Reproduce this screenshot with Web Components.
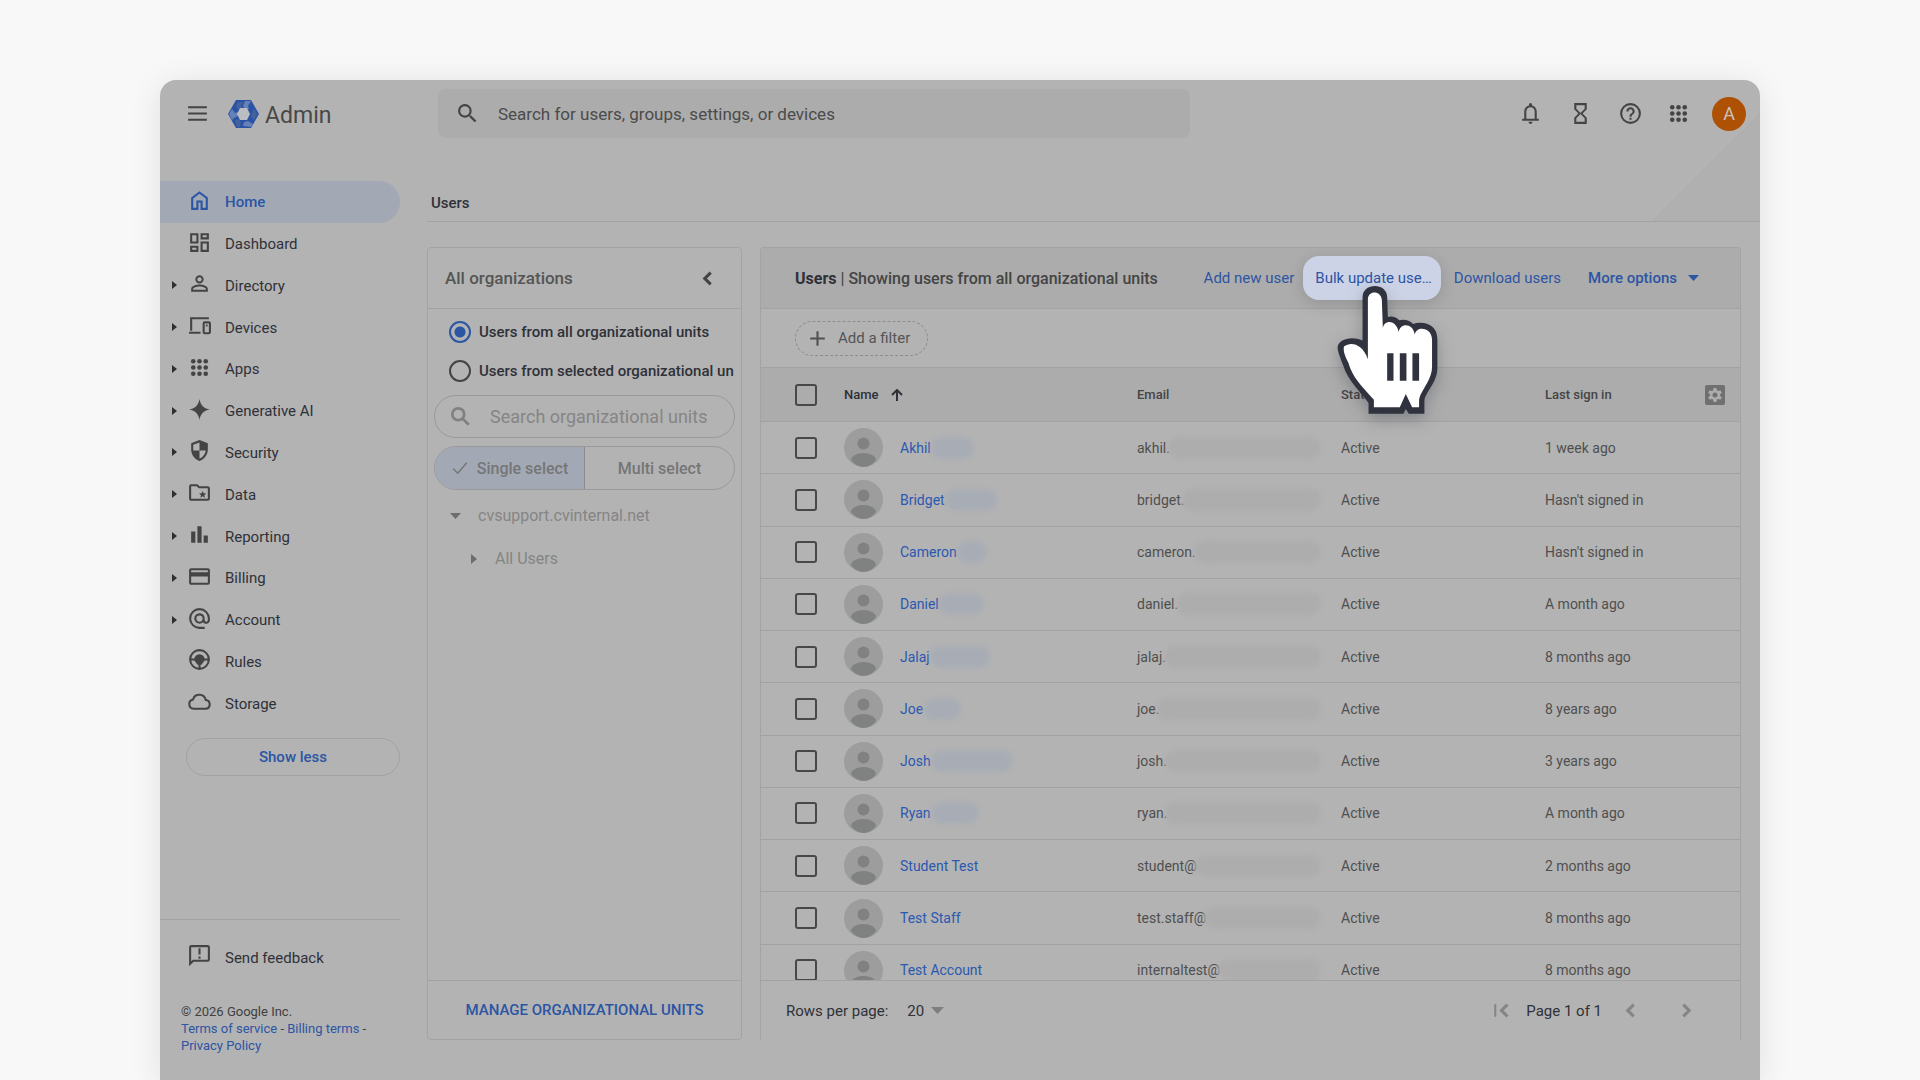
<!DOCTYPE html>
<html lang="en">
<head>
<meta charset="utf-8">
<title>Admin - Users</title>
<style>
  html, body { margin: 0; height: 100%; }
  body {
    overflow: hidden;
    background: #f8f8f8;
    font-family: Roboto, "Liberation Sans", sans-serif;
    font-size: 15px;
    color: #303238;
    --surface: #b3b3b3;
    --band: #acacac;
    --line: #a3a3a3;
    --ink: #2f3138;
    --icon: #444444;
    --blue: #2c55a4;
    --tint: #a2a9b5;
  }
</style>
</head>
<body>
<admin-app></admin-app>

<template id="t-app">
  <style>
    :host { display: flex; height: 100vh; box-sizing: border-box; padding: 80px 160px 0; }
    .window {
      flex: 1; min-width: 0; display: flex; flex-direction: column; position: relative;
      background: var(--surface); border-radius: 16px 16px 0 0; overflow: hidden;
      box-shadow: 0 4px 32px rgba(0,0,0,.1);
    }
    .corner { position: absolute; top: 0; right: 0; width: 108px; height: 142px; }
    admin-topbar { position: relative; }
    .work { flex: 1; min-height: 0; display: flex; }
    main { flex: 1; min-width: 0; display: flex; flex-direction: column; padding: 33px 0 40px 27px; position: relative; }
    h1 { margin: 0; height: 41px; line-height: 46px; padding-left: 4px; font-size: 15px; font-weight: 500; color: var(--ink); border-bottom: 1px solid var(--line); }
    .panels { flex: 1; min-height: 0; display: flex; gap: 18px; padding: 25px 19px 0 0; }
    users-panel { flex: 1; min-width: 0; }
  </style>
  <div class="window">
    <svg class="corner" viewBox="0 0 108 142" aria-hidden="true">
      <path d="M0 142 108 34V142z" fill="#b0b0b0"/><path d="M0 142 108 34" stroke="#ababab"/>
    </svg>
    <admin-topbar></admin-topbar>
    <div class="work">
      <admin-sidebar></admin-sidebar>
      <main>
        <h1>Users</h1>
        <div class="panels">
          <org-panel></org-panel>
          <users-panel></users-panel>
        </div>
      </main>
    </div>
  </div>
</template>

<template id="t-topbar">
  <style>
    :host { display: flex; align-items: center; height: 67px; padding: 0 14px 0 25px; }
    button { background: none; border: 0; padding: 0; color: var(--icon); display: flex; }
    .brand { display: flex; align-items: center; gap: 6px; margin-left: 18px; width: 195px; font-size: 23px; color: #484848; text-decoration: none; }
    .brand svg { width: 31px; height: 28px; }
    .brand span { padding-top: 3px; }
    .search { flex: 0 1 752px; height: 49px; display: flex; align-items: center; gap: 18px; box-sizing: border-box; padding: 0 17px; margin-left: 15px; background: var(--band); border-radius: 8px; color: var(--icon); }
    input { flex: 1; min-width: 0; border: 0; background: none; outline: 0; font: inherit; font-size: 17px; padding: 0; }
    input::placeholder { color: #4b4b4b; opacity: 1; }
    .tools { margin-left: auto; display: flex; align-items: center; gap: 25px; }
    .tools .apps { margin-left: -2px; }
    .avatar { width: 34px; height: 34px; border-radius: 50%; background: #ae5104; color: #c9c3bd; font: 400 18px Roboto, sans-serif; align-items: center; justify-content: center; margin-left: -4px; }
  </style>
  <button aria-label="Main menu"><ui-icon name="menu"></ui-icon></button>
  <a class="brand" href="#">
    <svg viewBox="0 0 31 28" aria-hidden="true">
      <path d="M8 0h15l8 14-8 14H8L0 14z" fill="#2a53a6"/>
      <path d="M17 1h6l-3 5 1 3h-4l-2-3zM1 14l3-5 3 4 3-1v4l-4 2-2 2zM15 26l1-4 4-1 5 3-2 3z" fill="#6681b8"/>
      <path d="M10 2h5l-2 4 1 2-4 1-2-3zM26 8l3 6-3 6-3-3 1-4zM7 20l4-1 2 4-1 4H9z" fill="#43629c"/>
      <path d="M12 8h7l3 6-3 6h-7l-3-6z" fill="#bcbdc1"/>
    </svg>
    <span>Admin</span>
  </a>
  <label class="search"><ui-icon name="search"></ui-icon><input type="text" aria-label="Search" placeholder="Search for users, groups, settings, or devices"></label>
  <div class="tools">
    <button aria-label="Notifications"><ui-icon name="bell"></ui-icon></button>
    <button aria-label="Tasks"><ui-icon name="hourglass"></ui-icon></button>
    <button aria-label="Help"><ui-icon name="help"></ui-icon></button>
    <button class="apps" aria-label="Google apps"><ui-icon name="apps"></ui-icon></button>
    <button class="avatar" aria-label="Account A">A</button>
  </div>
</template>

<template id="t-sidebar">
  <style>
    :host { display: flex; flex-direction: column; width: 240px; box-sizing: border-box; padding: 34px 0 26px; }
    nav { display: grid; grid-auto-rows: 1fr; height: 543px; }
    .less { align-self: stretch; margin: 14px 0 0 26px; height: 38px; border: 1px solid #a2a2a2; border-radius: 19px; background: none; color: var(--blue); font: inherit; font-size: 15px; font-weight: 500; }
    .foot { margin-top: auto; border-top: 1px solid var(--line); padding-top: 16px; }
    .foot nav-item { height: 42px; }
    .legal { margin: 25px 10px 0 21px; font-size: 13px; line-height: 17px; color: #404040; }
    a { color: var(--blue); text-decoration: none; }
  </style>
  <nav aria-label="Main"></nav>
  <button class="less">Show less</button>
  <div class="foot">
    <nav-item icon="feedback">Send feedback</nav-item>
    <div class="legal">© 2026 Google Inc.<br><a href="#">Terms of service</a> - <a href="#">Billing terms</a> -<br><a href="#">Privacy Policy</a></div>
  </div>
</template>

<template id="t-nav">
  <style>
    :host { display: block; }
    a { display: flex; align-items: center; height: 100%; box-sizing: border-box; padding-left: 12px; color: var(--ink); text-decoration: none; font-size: 15px; border-radius: 0 21px 21px 0; }
    .caret { width: 5px; height: 8px; margin-right: 10px; }
    .caret path { fill: #2f2f2f; }
    :host(:not([expandable])) .caret { visibility: hidden; }
    ui-icon { color: var(--icon); padding-bottom: 3px; }
    span { margin-left: 13px; padding-top: 1px; }
    :host([active]) a { background: var(--tint); color: var(--blue); font-weight: 500; }
    :host([active]) ui-icon { color: var(--blue); }
  </style>
  <a href="#"><svg class="caret" viewBox="0 0 5 8" aria-hidden="true"><path d="M0 0l5 4-5 4z"/></svg><ui-icon></ui-icon><span><slot></slot></span></a>
</template>

<template id="t-org">
  <style>
    :host { display: flex; flex-direction: column; box-sizing: border-box; width: 315px; border: 1px solid var(--line); border-radius: 4px; overflow: hidden; }
    header { display: flex; align-items: center; justify-content: space-between; height: 60px; padding: 0 21px 0 17px; border-bottom: 1px solid var(--line); }
    h2 { margin: 0; font-size: 17px; font-weight: 500; color: #555; }
    button { border: 0; background: none; padding: 0; font: inherit; display: flex; align-items: center; justify-content: center; }
    header button { color: #444; }
    .radios { display: flex; flex-direction: column; gap: 17px; padding: 12px 0 0 21px; }
    .radios label { display: flex; align-items: center; gap: 8px; white-space: nowrap; font-size: 15px; font-weight: 500; height: 22px; color: var(--ink); }
    input[type=radio] { appearance: none; flex: none; margin: 0; width: 22px; height: 22px; border: 2px solid #444; border-radius: 50%; }
    input[type=radio]:checked { border-color: var(--blue); background: radial-gradient(circle, var(--blue) 5px, transparent 6px); }
    .search { display: flex; align-items: center; gap: 18px; height: 41px; margin: 13px 6px 0; padding: 0 15px; border: 1px solid #999; border-radius: 22px; color: #818181; }
    .search input { flex: 1; min-width: 0; border: 0; padding: 0; background: none; outline: 0; font: inherit; font-size: 18px; }
    .search input::placeholder { color: #858585; opacity: 1; }
    .seg { display: flex; height: 42px; margin: 8px 6px 0; border: 1px solid #999; border-radius: 22px; overflow: hidden; }
    .seg button { flex: 1; font-size: 16px; font-weight: 500; color: #767676; gap: 8px; }
    .seg button[aria-pressed=true] { background: var(--tint); border-right: 1px solid #8d8d8d; }
    .tree { list-style: none; margin: 0; padding: 4px 0 0 22px; color: #858585; font-size: 16px; }
    .tree li { display: flex; align-items: center; gap: 9px; height: 43px; }
    .tree .child { padding-left: 17px; }
    .tree svg { width: 19px; height: 10px; fill: #6d6d6d; }
    footer { margin-top: auto; height: 58px; display: flex; border-top: 1px solid var(--line); }
    footer button { flex: 1; color: var(--blue); font-size: 15px; font-weight: 500; }
  </style>
  <header><h2>All organizations</h2><button aria-label="Collapse"><ui-icon name="left"></ui-icon></button></header>
  <div class="radios">
    <label><input type="radio" name="scope" checked>Users from all organizational units</label>
    <label><input type="radio" name="scope">Users from selected organizational un</label>
  </div>
  <label class="search"><ui-icon name="searchbold" size="22"></ui-icon><input type="text" aria-label="Search organizational units" placeholder="Search organizational units"></label>
  <div class="seg"><button aria-pressed="true"><ui-icon name="check" size="18"></ui-icon>Single select</button><button aria-pressed="false">Multi select</button></div>
  <ul class="tree">
    <li><svg viewBox="0 0 19 10" aria-hidden="true"><path d="M0 2h11l-5.500 6z"/></svg>cvsupport.cvinternal.net</li>
    <li class="child"><svg viewBox="0 0 19 10" aria-hidden="true"><path d="M4 0l6 5-6 5z"/></svg>All Users</li>
  </ul>
  <footer><button>MANAGE ORGANIZATIONAL UNITS</button></footer>
</template>

<template id="t-users">
  <style>
    :host { display: flex; flex-direction: column; box-sizing: border-box; border: 1px solid var(--line); border-bottom: 0; border-radius: 4px 4px 0 0; }
    header { display: flex; align-items: center; height: 60px; padding: 0 41px 0 34px; background: var(--band); border-bottom: 1px solid var(--line); white-space: nowrap; }
    h2 { margin: 0; font-size: 16px; font-weight: 500; color: #444; }
    b { font-weight: 700; color: var(--ink); }
    button { border: 0; background: none; padding: 0; font: inherit; color: var(--blue); display: flex; align-items: center; }
    .actions { margin-left: auto; display: flex; align-items: center; font-size: 15px; }
    .spot { position: relative; margin: 0 13px 0 9px; }
    .spot button { height: 44px; padding: 0 9px 0 12px; border-radius: 16px; background: #cdd3e6; box-shadow: 0 4px 16px rgba(0,0,0,.14); }
    .hand { position: absolute; left: 34px; top: 30px; width: 101px; height: 128px; overflow: visible; z-index: 2; filter: drop-shadow(0 6px 8px rgba(40,44,60,.3)); pointer-events: none; }
    .more { margin-left: 27px; gap: 11px; font-weight: 500; }
    .filter { display: flex; align-items: center; height: 58px; padding-left: 34px; border-bottom: 1px solid var(--line); }
    .filter button { height: 35px; padding: 0 17px 0 9px; gap: 8px; border: 1px dashed #8c8c8c; border-radius: 18px; color: #555; font-size: 15px; }
    .filter ui-icon { color: #505050; }
    user-table { flex: 1; min-height: 0; }
    footer { display: flex; align-items: center; height: 59px; flex: none; border-top: 1px solid var(--line); padding: 0 41px 0 25px; font-size: 15px; color: var(--ink); }
    select { appearance: none; border: 0; background: none; padding: 0; margin: 0 7px 0 19px; font: inherit; color: var(--ink); }
    .pager { margin-left: auto; display: flex; align-items: center; }
    .pager button { color: #858585; }
    .pager .first { margin-right: 12px; }
    .pager .prev { margin: 0 31px 0 16px; }
  </style>
  <header>
    <h2><b>Users</b> | Showing users from all organizational units</h2>
    <div class="actions">
      <button>Add new user</button>
      <div class="spot">
        <button>Bulk update use…</button>
        <svg class="hand" viewBox="530 138 302 385" aria-hidden="true">
          <path fill="#30333d" d="M606 302V172C606 127 680 127 680 172L682 231Q702 226 716 241Q740 235 758 252Q770 247 790 249Q831 256 831 300V385C831 430 792 460 792 485V522H745L736 508 729 522H624V490C600 455 562 425 547 375C538 350 531 335 531 322C533 300 570 286 606 302Z"/>
          <path fill="#fff" d="M622 358V178C622 150 662 150 664 180L667 264C672 240 705 238 715 276C718 248 758 248 763 284C768 256 815 262 815 300V380C815 425 776 455 776 485V503H755L736 463 718 503H640V480C600 435 577 415 563 368C554 350 547 335 550 320C570 305 605 310 622 358Z"/>
          <path fill="#30333d" d="M680 340h19v83h-19zM718 340h20v83h-20zM756 340h20v83h-20z"/>
        </svg>
      </div>
      <button>Download users</button>
      <button class="more">More options<svg width="11" height="6" viewBox="0 0 11 6" aria-hidden="true"><path d="M0 0h11L5.500 6z" fill="currentColor"/></svg></button>
    </div>
  </header>
  <div class="filter"><button><ui-icon name="plus"></ui-icon>Add a filter</button></div>
  <user-table></user-table>
  <footer>
    <label for="rows">Rows per page:</label>
    <select id="rows"><option>20</option></select>
    <svg width="13" height="7" viewBox="0 0 13 7" aria-hidden="true"><path d="M0 0h13L6.500 7z" fill="#7e7e7e"/></svg>
    <div class="pager">
      <button class="first" aria-label="First page"><ui-icon name="first"></ui-icon></button>
      <span>Page 1 of 1</span>
      <button class="prev" aria-label="Previous page"><ui-icon name="left"></ui-icon></button>
      <button aria-label="Next page"><ui-icon name="right"></ui-icon></button>
    </div>
  </footer>
</template>

<template id="t-table">
  <style>
    :host { display: block; overflow: hidden; }
    table { width: 100%; height: 629px; table-layout: fixed; border-collapse: separate; border-spacing: 0; }
    th, td { padding: 0; text-align: left; box-sizing: border-box; border-bottom: 1px solid #a2a2a2; font-size: 14px; color: #4f4f4f; white-space: nowrap; }
    th { height: 54px; background: var(--band); font-size: 13px; font-weight: 500; color: #444; }
    td { height: 52px; }
    th:first-child, td:first-child { padding-left: 34px; }
    input { appearance: none; display: block; margin: 0; width: 22px; height: 22px; border: 2px solid #484848; border-radius: 3px; }
    .sort { display: flex; align-items: center; gap: 12px; color: var(--ink); }
    .last { display: flex; align-items: center; }
    .person, .mail { display: flex; align-items: center; }
    .person svg { width: 39px; height: 39px; margin-right: 17px; flex: none; }
    a { color: #2b58b0; text-decoration: none; font-weight: 400; }
    .veil { height: 22px; border-radius: 11px; filter: blur(2px); }
    .person .veil { background: #a8adb5; }
    .mail { padding-right: 20px; }
    .mail .veil { background: #adadad; flex: 1; margin-left: -2px; }
    .gear { display: block; border: 0; padding: 0; background: none; margin-left: auto; margin-right: 15px; height: 20px; }
  </style>
  <table>
    <colgroup><col style="width:83px"><col style="width:293px"><col style="width:204px"><col style="width:204px"><col style="width:195px"></colgroup>
    <thead><tr>
      <th><input type="checkbox" aria-label="Select all users"></th>
      <th><span class="sort">Name <svg width="12" height="12" viewBox="0 0 12 12" fill="none" stroke="currentColor" stroke-width="2" aria-hidden="true"><path d="M6 12V1M1 6l5-5 5 5"/></svg></span></th>
      <th>Email</th><th>Status</th>
      <th><div class="last">Last sign in
        <button class="gear" aria-label="Manage columns"><svg width="20" height="20" viewBox="0 0 20 20"><rect width="20" height="20" rx="2" fill="#707070"/><g fill="#adadad"><circle cx="10" cy="10" r="5"/><path d="M8.500 3h3l.5 3H8zM8.500 17h3l.5-3H8z"/><path d="M8.500 3h3l.5 3H8zM8.500 17h3l.5-3H8z" transform="rotate(60 10 10)"/><path d="M8.500 3h3l.5 3H8zM8.500 17h3l.5-3H8z" transform="rotate(120 10 10)"/></g><circle cx="10" cy="10" r="2.500" fill="#707070"/></svg></button></div></th>
    </tr></thead>
    <tbody></tbody>
  </table>
</template>

<script>
const ICONS = {
  menu: '<path d="M3 5h18v2H3zM3 11h18v2H3zM3 17h18v2H3z"/>',
  search: '<path d="M15.500 14h-.8l-.3-.3a6.500 6.500 0 1 0-.7.700l.3.300v.8l5 5 1.500-1.500zm-6 0a4.500 4.500 0 1 1 0-9 4.500 4.500 0 0 1 0 9z"/>',
  searchbold: '<g fill="none" stroke="currentColor" stroke-width="3"><circle cx="9" cy="9" r="6.500"/><path d="M13.500 13.500l7 7"/></g>',
  bell: '<path d="M4 19v-2h2v-7c0-2.800 1.700-5.100 4.500-5.800v-.7a1.500 1.500 0 0 1 3 0v.7C16.300 4.900 18 7.200 18 10v7h2v2zm8 3a2 2 0 0 1-2-2h4a2 2 0 0 1-2 2zm-4-5h8v-7a4 4 0 0 0-8 0z"/>',
  hourglass: '<path d="M6 2v6l4 4-4 4v6h12v-6l-4-4 4-4V2zm10 14.500V20H8v-3.500l4-4zm-4-5l-4-4V4h8v3.500z"/>',
  help: '<path d="M11 18h2v-2h-2zm1-16a10 10 0 1 0 0 20 10 10 0 0 0 0-20zm0 18a8 8 0 1 1 0-16 8 8 0 0 1 0 16zm0-14a4 4 0 0 0-4 4h2a2 2 0 1 1 4 0c0 2-3 1.750-3 5h2c0-2.250 3-2.500 3-5a4 4 0 0 0-4-4z"/>',
  apps: [6,12,18].map(y => [6,12,18].map(x => `<circle cx="${x}" cy="${y}" r="2.200"/>`).join('')).join(''),
  home: '<path d="M6 19h3v-7h6v7h3v-9l-6-4.500L6 10zm-2 2V9l8-6 8 6v12h-7v-7h-2v7z"/>',
  dashboard: '<path d="M19 5v2h-4V5h4M9 5v6H5V5h4m10 8v6h-4v-6h4M9 17v2H5v-2h4M21 3h-8v6h8V3zM11 3H3v10h8V3zm10 8h-8v10h8V11zm-10 4H3v6h8v-6z"/>',
  person: '<path d="M12 5.900a2.100 2.100 0 1 1 0 4.200 2.100 2.100 0 0 1 0-4.200m0 9c2.970 0 6.100 1.460 6.100 2.100v1.100H5.900V17c0-.64 3.130-2.100 6.100-2.100M12 4a4 4 0 1 0 0 8 4 4 0 0 0 0-8zm0 9c-2.670 0-8 1.340-8 4v3h16v-3c0-2.660-5.330-4-8-4z"/>',
  devices: '<g fill="none" stroke="currentColor" stroke-width="2"><path d="M21 5H4v12M2 19h11"/><rect x="16" y="9" width="6" height="10.500" rx="1"/></g><circle cx="19" cy="12" r="1"/>',
  sparkle: '<path d="M12 2c1 5.500 3.500 9 10 10-6.500 1-9 4.500-10 10-1-5.500-3.500-9-10-10 6.500-1 9-4.500 10-10z"/>',
  shield: '<path d="M12 2 4 5v6c0 5 3.400 9.300 8 11 4.600-1.700 8-6 8-11V5zm0 2.200V12h6c-.5 3.500-3 6.700-6 7.800V12H6V6.400z"/>',
  folder: '<path d="M20 6h-8l-2-2H4a2 2 0 0 0-2 2v12c0 1.100.9 2 2 2h16a2 2 0 0 0 2-2V8a2 2 0 0 0-2-2zm0 12H4V6h5.200l2 2H20zm-7.200-1 .6-2.500L11.500 13l2.500-.2 1-2.300 1 2.300 2.500.2-1.900 1.600.6 2.400-2.200-1.300z"/>',
  chart: '<path d="M4 9h4v11H4zM10 4h4v16h-4zM16 13h4v7h-4z"/>',
  card: '<path d="M20 4H4a2 2 0 0 0-2 2v12c0 1.100.9 2 2 2h16a2 2 0 0 0 2-2V6a2 2 0 0 0-2-2zm0 14H4v-6h16zm0-10H4V6h16z"/>',
  at: '<path d="M12 2a10 10 0 0 0 0 20h5v-2h-5a8 8 0 1 1 8-8v1.400c0 .8-.7 1.600-1.500 1.600s-1.500-.8-1.500-1.600V12a5 5 0 1 0-1.500 3.500c.7.900 1.800 1.500 3 1.500 2 0 3.500-1.600 3.500-3.600V12A10 10 0 0 0 12 2zm0 13a3 3 0 1 1 0-6 3 3 0 0 1 0 6z"/>',
  wheel: '<g fill="none" stroke="currentColor" stroke-width="2"><circle cx="12" cy="12" r="9"/><path d="M3 12h18M12 14v7"/></g><path d="M12 7a5 5 0 0 1 5 5c0 2-2 3-3 5h-4c-1-2-3-3-3-5a5 5 0 0 1 5-5z"/>',
  cloud: '<path fill="none" stroke="currentColor" stroke-width="2" d="M6.500 19A4.500 4.500 0 0 1 5.800 10.100 6.300 6.300 0 0 1 18 10.500 4.300 4.300 0 0 1 18.300 19z"/>',
  feedback: '<path fill="none" stroke="currentColor" stroke-width="2" d="M3 20V4q0-1 1-1h16q1 0 1 1v12q0 1-1 1H6z"/><path d="M11 5h2v6h-2zM11 13h2v2h-2z"/>',
  left: '<path d="M15.400 7.400 14 6l-6 6 6 6 1.400-1.400L10.800 12z" stroke="currentColor"/>',
  right: '<path d="M10 6 8.600 7.400l4.600 4.600-4.600 4.600L10 18l6-6z" stroke="currentColor"/>',
  first: '<path d="M18 7.400 16.600 6l-6 6 6 6 1.400-1.400L13.400 12z" stroke="currentColor"/><path d="M5 6h2v12H5z"/>',
  check: '<path fill="none" stroke="currentColor" stroke-width="2" d="M3 13l6 6L21 5"/>',
  plus: '<path d="M5 11h6V5h2v6h6v2h-6v6h-2v-6H5z"/>'
};

const stamp = (host, id) => {
  const root = host.attachShadow({ mode: 'open' });
  root.append(document.getElementById(id).content.cloneNode(true));
  return root;
};

class UiIcon extends HTMLElement {
  static observedAttributes = ['name'];
  constructor() { super(); this.attachShadow({ mode: 'open' }); }
  attributeChangedCallback() { this.draw(); }
  draw() {
    const s = this.getAttribute('size') || 25;
    this.shadowRoot.innerHTML = `<style>:host{display:inline-flex;flex:none}svg{fill:currentColor}</style><svg width="${s}" height="${s}" viewBox="0 0 24 24" aria-hidden="true">${ICONS[this.getAttribute('name')] || ''}</svg>`;
  }
}

class NavItem extends HTMLElement {
  constructor() { super(); this.root = stamp(this, 't-nav'); }
  connectedCallback() { this.root.querySelector('ui-icon').setAttribute('name', this.getAttribute('icon')); }
}

class AdminSidebar extends HTMLElement {
  constructor() {
    super();
    const items = [
      ['Home', 'home', 'active'], ['Dashboard', 'dashboard', ''], ['Directory', 'person', 'expandable'],
      ['Devices', 'devices', 'expandable'], ['Apps', 'apps', 'expandable'], ['Generative AI', 'sparkle', 'expandable'],
      ['Security', 'shield', 'expandable'], ['Data', 'folder', 'expandable'], ['Reporting', 'chart', 'expandable'],
      ['Billing', 'card', 'expandable'], ['Account', 'at', 'expandable'], ['Rules', 'wheel', ''], ['Storage', 'cloud', '']
    ];
    stamp(this, 't-sidebar').querySelector('nav').innerHTML =
      items.map(([t, i, f]) => `<nav-item icon="${i}" ${f}>${t}</nav-item>`).join('');
  }
}

class UserTable extends HTMLElement {
  constructor() {
    super();
    // first name, width of the hidden surname, start of the e-mail, last sign in
    const users = [
      ['Akhil', 43, 'akhil.', '1 week ago'], ['Bridget', 52, 'bridget.', "Hasn't signed in"],
      ['Cameron', 30, 'cameron.', "Hasn't signed in"], ['Daniel', 45, 'daniel.', 'A month ago'],
      ['Jalaj', 60, 'jalaj.', '8 months ago'], ['Joe', 38, 'joe.', '8 years ago'],
      ['Josh', 82, 'josh.', '3 years ago'], ['Ryan', 48, 'ryan.', 'A month ago'],
      ['Student Test', 0, 'student@', '2 months ago'], ['Test Staff', 0, 'test.staff@', '8 months ago'],
      ['Test Account', 0, 'internaltest@', '8 months ago']
    ];
    const face = '<svg viewBox="0 0 39 39" aria-hidden="true"><circle cx="19.500" cy="19.500" r="19.500" fill="#9d9d9d"/><circle cx="19.500" cy="15.500" r="6" fill="#808281"/><path d="M7 32c0-4 6-7 12.500-7S32 28 32 32c-3 4-7.500 7-12.500 7S10 36 7 32z" fill="#808281"/></svg>';
    stamp(this, 't-table').querySelector('tbody').innerHTML = users.map(([n, w, m, l]) =>
      `<tr><td><input type="checkbox" aria-label="Select ${n}"></td><td><div class="person">${face}<a href="#">${n}</a>${w ? `<span class="veil" style="width:${w}px"></span>` : ''}</div></td><td><div class="mail">${m}<span class="veil"></span></div></td><td>Active</td><td>${l}</td></tr>`).join('');
  }
}

customElements.define('ui-icon', UiIcon);
customElements.define('nav-item', NavItem);
customElements.define('admin-topbar', class extends HTMLElement { constructor() { super(); stamp(this, 't-topbar'); } });
customElements.define('admin-sidebar', AdminSidebar);
customElements.define('org-panel', class extends HTMLElement { constructor() { super(); stamp(this, 't-org'); } });
customElements.define('user-table', UserTable);
customElements.define('users-panel', class extends HTMLElement { constructor() { super(); stamp(this, 't-users'); } });
customElements.define('admin-app', class extends HTMLElement { constructor() { super(); stamp(this, 't-app'); } });
</script>
</body>
</html>
